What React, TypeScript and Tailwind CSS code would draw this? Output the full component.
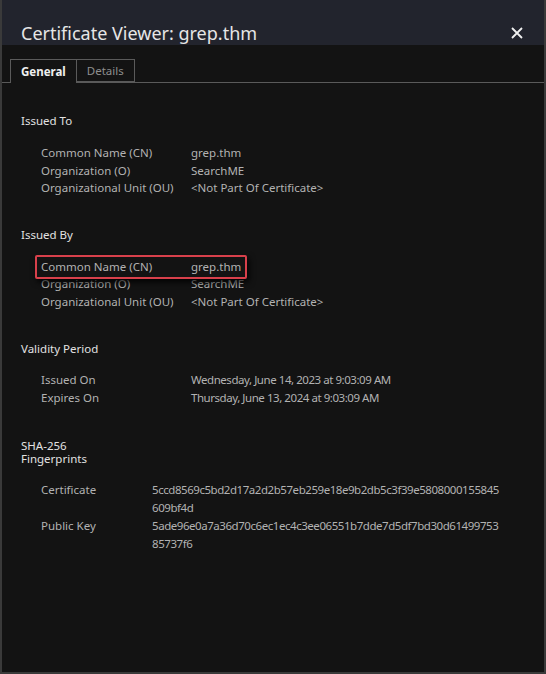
import React from "react";

const font = { fontFamily: '"Noto Sans", "Open Sans", sans-serif' };

function Row({ label, value, labelW = "w-[150px]", tight = false, lh = "leading-[17.5px]" }: { label: string; value: React.ReactNode; labelW?: string; tight?: boolean; lh?: string }) {
  return (
    <div className={`flex ${lh}`}>
      <div className={`${labelW} shrink-0`}>{label}</div>
      <div className={tight ? "tracking-[-0.45px]" : ""}>{value}</div>
    </div>
  );
}

function SectionHead({ children }: { children: React.ReactNode }) {
  return <div className="text-[11.5px] leading-[13px] text-[#e2e2e2]">{children}</div>;
}

export default function App() {
  return (
    <div style={font} className="w-[546px] h-[674px] bg-[#131313] border-x-2 border-b-2 border-[#3a3a3a] flex flex-col overflow-hidden">
      <div className="h-[45px] bg-[#22242d] flex items-start justify-between pl-[19px] pr-[21px] pt-[20px] shrink-0">
        <div className="text-[18px] leading-[26px] text-[#e6e6e6]">Certificate Viewer: grep.thm</div>
        <svg width="12" height="12" viewBox="0 0 12 12" className="mt-[7px]">
          <path d="M1 1 L11 11 M11 1 L1 11" stroke="#f0f0f0" strokeWidth="1.8" />
        </svg>
      </div>
      <div className="pt-[14px] shrink-0">
        <div className="flex border-b border-[#5a5a5a] pl-[8px] h-[24px]">
          <div className="px-[10px] border border-b-0 border-[#5a5a5a] bg-[#131313] text-[11.5px] font-bold text-[#f0f0f0] flex items-center h-[24px] relative -mb-px">General</div>
          <div className="px-[10px] border border-l-0 border-[#5a5a5a] text-[11.5px] text-[#8e8e8e] flex items-center h-[23px]">Details</div>
        </div>
      </div>
      <div className="pl-[19px] text-[11.5px] text-[#b2b2b2]">
        <div className="mt-[31px]">
          <SectionHead>Issued To</SectionHead>
          <div className="pl-[20px] mt-[17px]">
            <Row label="Common Name (CN)" value="grep.thm" />
            <Row label="Organization (O)" value="SearchME" />
            <Row label="Organizational Unit (OU)" value="<Not Part Of Certificate>" />
          </div>
        </div>
        <div className="mt-[31px]">
          <SectionHead>Issued By</SectionHead>
          <div className="pl-[20px] mt-[17px]">
            <div className="relative">
              <div className="absolute left-[-6px] top-[-3px] w-[212px] h-[24px] border-2 border-[#d8404b] rounded-[2px] shadow-[2px_3px_6px_rgba(0,0,0,0.9)]" />
              <Row label="Common Name (CN)" value="grep.thm" />
            </div>
            <Row label="Organization (O)" value="SearchME" />
            <Row label="Organizational Unit (OU)" value="<Not Part Of Certificate>" />
          </div>
        </div>
        <div className="mt-[32px]">
          <SectionHead>Validity Period</SectionHead>
          <div className="pl-[20px] mt-[16px]">
            <Row tight lh="leading-[18px]" label="Issued On" value="Wednesday, June 14, 2023 at 9:03:09 AM" />
            <Row tight lh="leading-[18px]" label="Expires On" value="Thursday, June 13, 2024 at 9:03:09 AM" />
          </div>
        </div>
        <div className="mt-[32px]">
          <SectionHead>
            SHA-256
            <br />
            Fingerprints
          </SectionHead>
          <div className="pl-[20px] mt-[16px]">
            <Row
              tight
              lh="leading-[18px]"
              labelW="w-[111px]"
              label="Certificate"
              value={
                <>
                  5ccd8569c5bd2d17a2d2b57eb259e18e9b2db5c3f39e5808000155845
                  <br />
                  609bf4d
                </>
              }
            />
            <Row
              tight
              lh="leading-[18px]"
              labelW="w-[111px]"
              label="Public Key"
              value={
                <>
                  5ade96e0a7a36d70c6ec1ec4c3ee06551b7dde7d5df7bd30d61499753
                  <br />
                  85737f6
                </>
              }
            />
          </div>
        </div>
      </div>
    </div>
  );
}
